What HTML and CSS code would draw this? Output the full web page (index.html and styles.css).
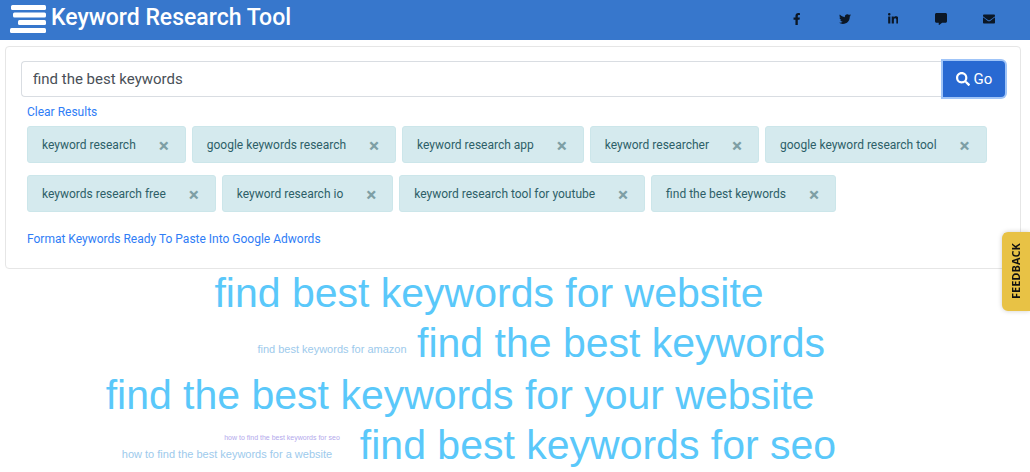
FILE: index.html
```html
<!DOCTYPE html>
<html lang="en">
<head>
  <meta charset="UTF-8">
  <meta name="viewport" content="width=device-width, initial-scale=1.0">
  <title>Keyword Research Tool</title>
  <link rel="stylesheet" href="styles.css">
</head>
<body>

  <!-- Header -->
  <header class="navbar">
    <a class="brand" href="#">
      <svg class="logo" width="36" height="28" viewBox="0 0 36 28" aria-hidden="true">
        <rect x="1" y="0" width="35" height="5" rx="1.5"/>
        <rect x="3" y="7.500" width="33" height="5" rx="1.5"/>
        <rect x="8" y="15" width="28" height="5" rx="1.5"/>
        <rect x="0" y="23" width="36" height="5" rx="1.5"/>
      </svg>
      <span>Keyword Research Tool</span>
    </a>
    <nav class="social">
      <a href="#" aria-label="Facebook">
        <svg viewBox="0 0 320 512"><path d="M279 288l14-93h-89v-60c0-25 12-50 52-50h41V7s-37-7-72-7c-73 0-121 44-121 125v70H23v93h81v224h100V288z"/></svg>
      </a>
      <a href="#" aria-label="Twitter">
        <svg viewBox="0 0 512 512"><path d="M459 152c0 4 0 9 0 14 0 138-105 298-298 298-59 0-114-17-161-47 8 1 16 1 25 1 49 0 94-16 130-44-46-1-85-31-98-73 7 1 13 2 20 2 9 0 19-1 28-4-48-10-84-52-84-103v-1c14 8 30 13 47 13-28-19-46-51-46-87 0-19 5-37 14-53 52 64 129 105 216 110-2-8-3-16-3-24 0-58 47-105 105-105 30 0 57 13 77 33 24-5 46-13 66-25-8 24-24 45-46 58 21-2 42-8 61-16-14 20-32 39-53 53z"/></svg>
      </a>
      <a href="#" aria-label="LinkedIn">
        <svg viewBox="0 0 448 512"><path d="M100 448H7V149h93zM54 108C24 108 0 83 0 54a54 54 0 0 1 108 0c0 29-24 54-54 54zM448 448h-93V302c0-34-1-79-48-79-49 0-56 38-56 77v148h-93V149h89v41h1c13-24 43-48 88-48 94 0 112 62 112 142z"/></svg>
      </a>
      <a href="#" aria-label="Comments">
        <svg viewBox="0 0 512 512"><path d="M448 0H64C29 0 0 29 0 64v288c0 35 29 64 64 64h96v84c0 10 11 16 19 10l125-94h144c35 0 64-29 64-64V64c0-35-29-64-64-64z"/></svg>
      </a>
      <a href="#" aria-label="Email">
        <svg viewBox="0 0 512 512"><path d="M502 191c4-3 10-1 10 4v205c0 27-21 48-48 48H48c-27 0-48-21-48-48V195c0-5 6-7 10-4 22 17 52 40 154 114 21 15 57 48 92 48 35 0 72-33 92-48 102-74 132-97 154-114zM256 320c23 0 57-29 73-41 133-96 143-105 173-128 6-5 10-12 10-20v-19c0-27-21-48-48-48H48c-27 0-48 21-48 48v19c0 8 4 15 10 20 30 23 40 32 173 128 16 12 50 41 73 41z"/></svg>
      </a>
    </nav>
  </header>

  <main>
    <!-- Search and saved keywords -->
    <section class="card">
      <form class="search">
        <input class="search-input" type="text" value="find the best keywords" aria-label="Keywords">
        <button class="search-button" type="submit">
          <svg width="14" height="14" viewBox="0 0 512 512" aria-hidden="true"><path d="M505 443L405 343c-4-4-10-7-17-7h-16c28-35 44-80 44-128C416 93 323 0 208 0S0 93 0 208s93 208 208 208c48 0 93-16 128-44v16c0 7 3 13 7 17l100 100c9 9 24 9 34 0l28-28c9-10 9-25 0-34zM208 336a128 128 0 1 1 0-256 128 128 0 0 1 0 256z"/></svg>
          Go
        </button>
      </form>

      <a class="text-link clear" href="#">Clear Results</a>

      <div class="chips">
        <div class="chip">keyword research <button type="button" aria-label="Remove">&times;</button></div>
        <div class="chip">google keywords research <button type="button" aria-label="Remove">&times;</button></div>
        <div class="chip">keyword research app <button type="button" aria-label="Remove">&times;</button></div>
        <div class="chip">keyword researcher <button type="button" aria-label="Remove">&times;</button></div>
        <div class="chip">google keyword research tool <button type="button" aria-label="Remove">&times;</button></div>
        <div class="chip">keywords research free <button type="button" aria-label="Remove">&times;</button></div>
        <div class="chip">keyword research io <button type="button" aria-label="Remove">&times;</button></div>
        <div class="chip">keyword research tool for youtube <button type="button" aria-label="Remove">&times;</button></div>
        <div class="chip">find the best keywords <button type="button" aria-label="Remove">&times;</button></div>
      </div>

      <a class="text-link format" href="#">Format Keywords Ready To Paste Into Google Adwords</a>
    </section>

    <!-- Word cloud -->
    <svg class="cloud" viewBox="0 0 1030 202">
      <text class="word-large" x="489" y="38">find best keywords for website</text>
      <text class="word-small" x="332" y="84">find best keywords for amazon</text>
      <text class="word-large" x="621" y="88">find the best keywords</text>
      <text class="word-large" x="460" y="140">find the best keywords for your website</text>
      <text class="word-tiny" x="282" y="171">how to find the best keywords for seo</text>
      <text class="word-small" x="227" y="189">how to find the best keywords for a website</text>
      <text class="word-large" x="598" y="190">find best keywords for seo</text>
    </svg>
  </main>

  <button class="feedback" type="button">FEEDBACK</button>

</body>
</html>
```
FILE: styles.css
```css
* {
  box-sizing: border-box;
}
body {
  margin: 0;
  background-color: #fff;
  font-family: Roboto, "Liberation Sans", sans-serif;
  font-size: 12px;
  color: #212529;
}
a {
  text-decoration: none;
}

/* Header */
.navbar {
  display: flex;
  align-items: center;
  justify-content: space-between;
  height: 40px;
  padding: 0 33px 2px 10px;
  background-color: #3777cc;
}
.brand {
  display: flex;
  align-items: center;
  gap: 5px;
  color: #fff;
  font-size: 23px;
  font-weight: 500;
  line-height: 34px;
  white-space: nowrap;
}
.brand span {
  padding-bottom: 2px;
}
.logo {
  fill: #fff;
}
.social {
  display: flex;
  gap: 32px;
}
.social a {
  display: flex;
  justify-content: center;
  width: 16px;
}
.social svg {
  height: 12px;
  fill: #0b1726;
}

/* Search card */
.card {
  margin: 6px 9px 0 5px;
  padding: 14px 15px 20px;
  border: 1px solid #e6e6e6;
  border-radius: 4px;
}
.search {
  display: flex;
  height: 36px;
}
.search-input {
  flex: 1;
  min-width: 0;
  padding: 0 11px;
  border: 1px solid #d9dde2;
  border-right: 0;
  border-radius: 4px 0 0 4px;
  font-family: inherit;
  font-size: 15px;
  color: #495057;
}
.search-button {
  display: flex;
  align-items: center;
  justify-content: center;
  gap: 4px;
  width: 62px;
  padding: 0;
  border: 0;
  border-radius: 0 4px 4px 0;
  background-color: #2869d2;
  box-shadow: 0 0 0 2px #9fc4f8;
  font-family: inherit;
  font-size: 15px;
  color: #fff;
}
.search-button svg {
  fill: #fff;
}
.text-link {
  display: block;
  width: fit-content;
  margin-left: 6px;
  line-height: 18px;
  color: #2f7df6;
}
.clear {
  margin-top: 6px;
  margin-bottom: 5px;
}
.format {
  margin-top: 18px;
}

/* Keyword chips */
.chips {
  display: flex;
  flex-wrap: wrap;
  gap: 12px 6px;
  margin-left: 6px;
}
.chip {
  display: flex;
  align-items: center;
  gap: 18px;
  height: 37px;
  padding: 0 11px 0 14px;
  border: 1px solid #cce6ea;
  border-radius: 3px;
  background-color: #d5eaee;
  color: #2d5f68;
}
.chip button {
  width: 20px;
  padding: 2px 0 0;
  border: 0;
  background: none;
  font-family: inherit;
  font-size: 19px;
  font-weight: 700;
  line-height: 18px;
  color: #7e9fa5;
}

/* Word cloud */
.cloud {
  display: block;
  width: 100%;
  font-family: "Liberation Sans", Arial, sans-serif;
  text-anchor: middle;
}
.word-large {
  font-size: 41px;
  fill: #5ac8fa;
}
.word-small {
  font-size: 11px;
  fill: #9dcaec;
}
.word-tiny {
  font-size: 7px;
  fill: #b3a9ec;
}

/* Feedback tab */
.feedback {
  position: fixed;
  top: 232px;
  right: 0;
  width: 28px;
  height: 79px;
  padding: 0;
  border: 0;
  border-radius: 0 6px 6px 0;
  background-color: #e8c245;
  box-shadow: 0 0 5px rgba(0, 0, 0, 0.2);
  font-family: "Open Sans", sans-serif;
  font-size: 11px;
  font-weight: 700;
  color: #111;
  writing-mode: vertical-rl;
  transform: rotate(180deg);
}
```
